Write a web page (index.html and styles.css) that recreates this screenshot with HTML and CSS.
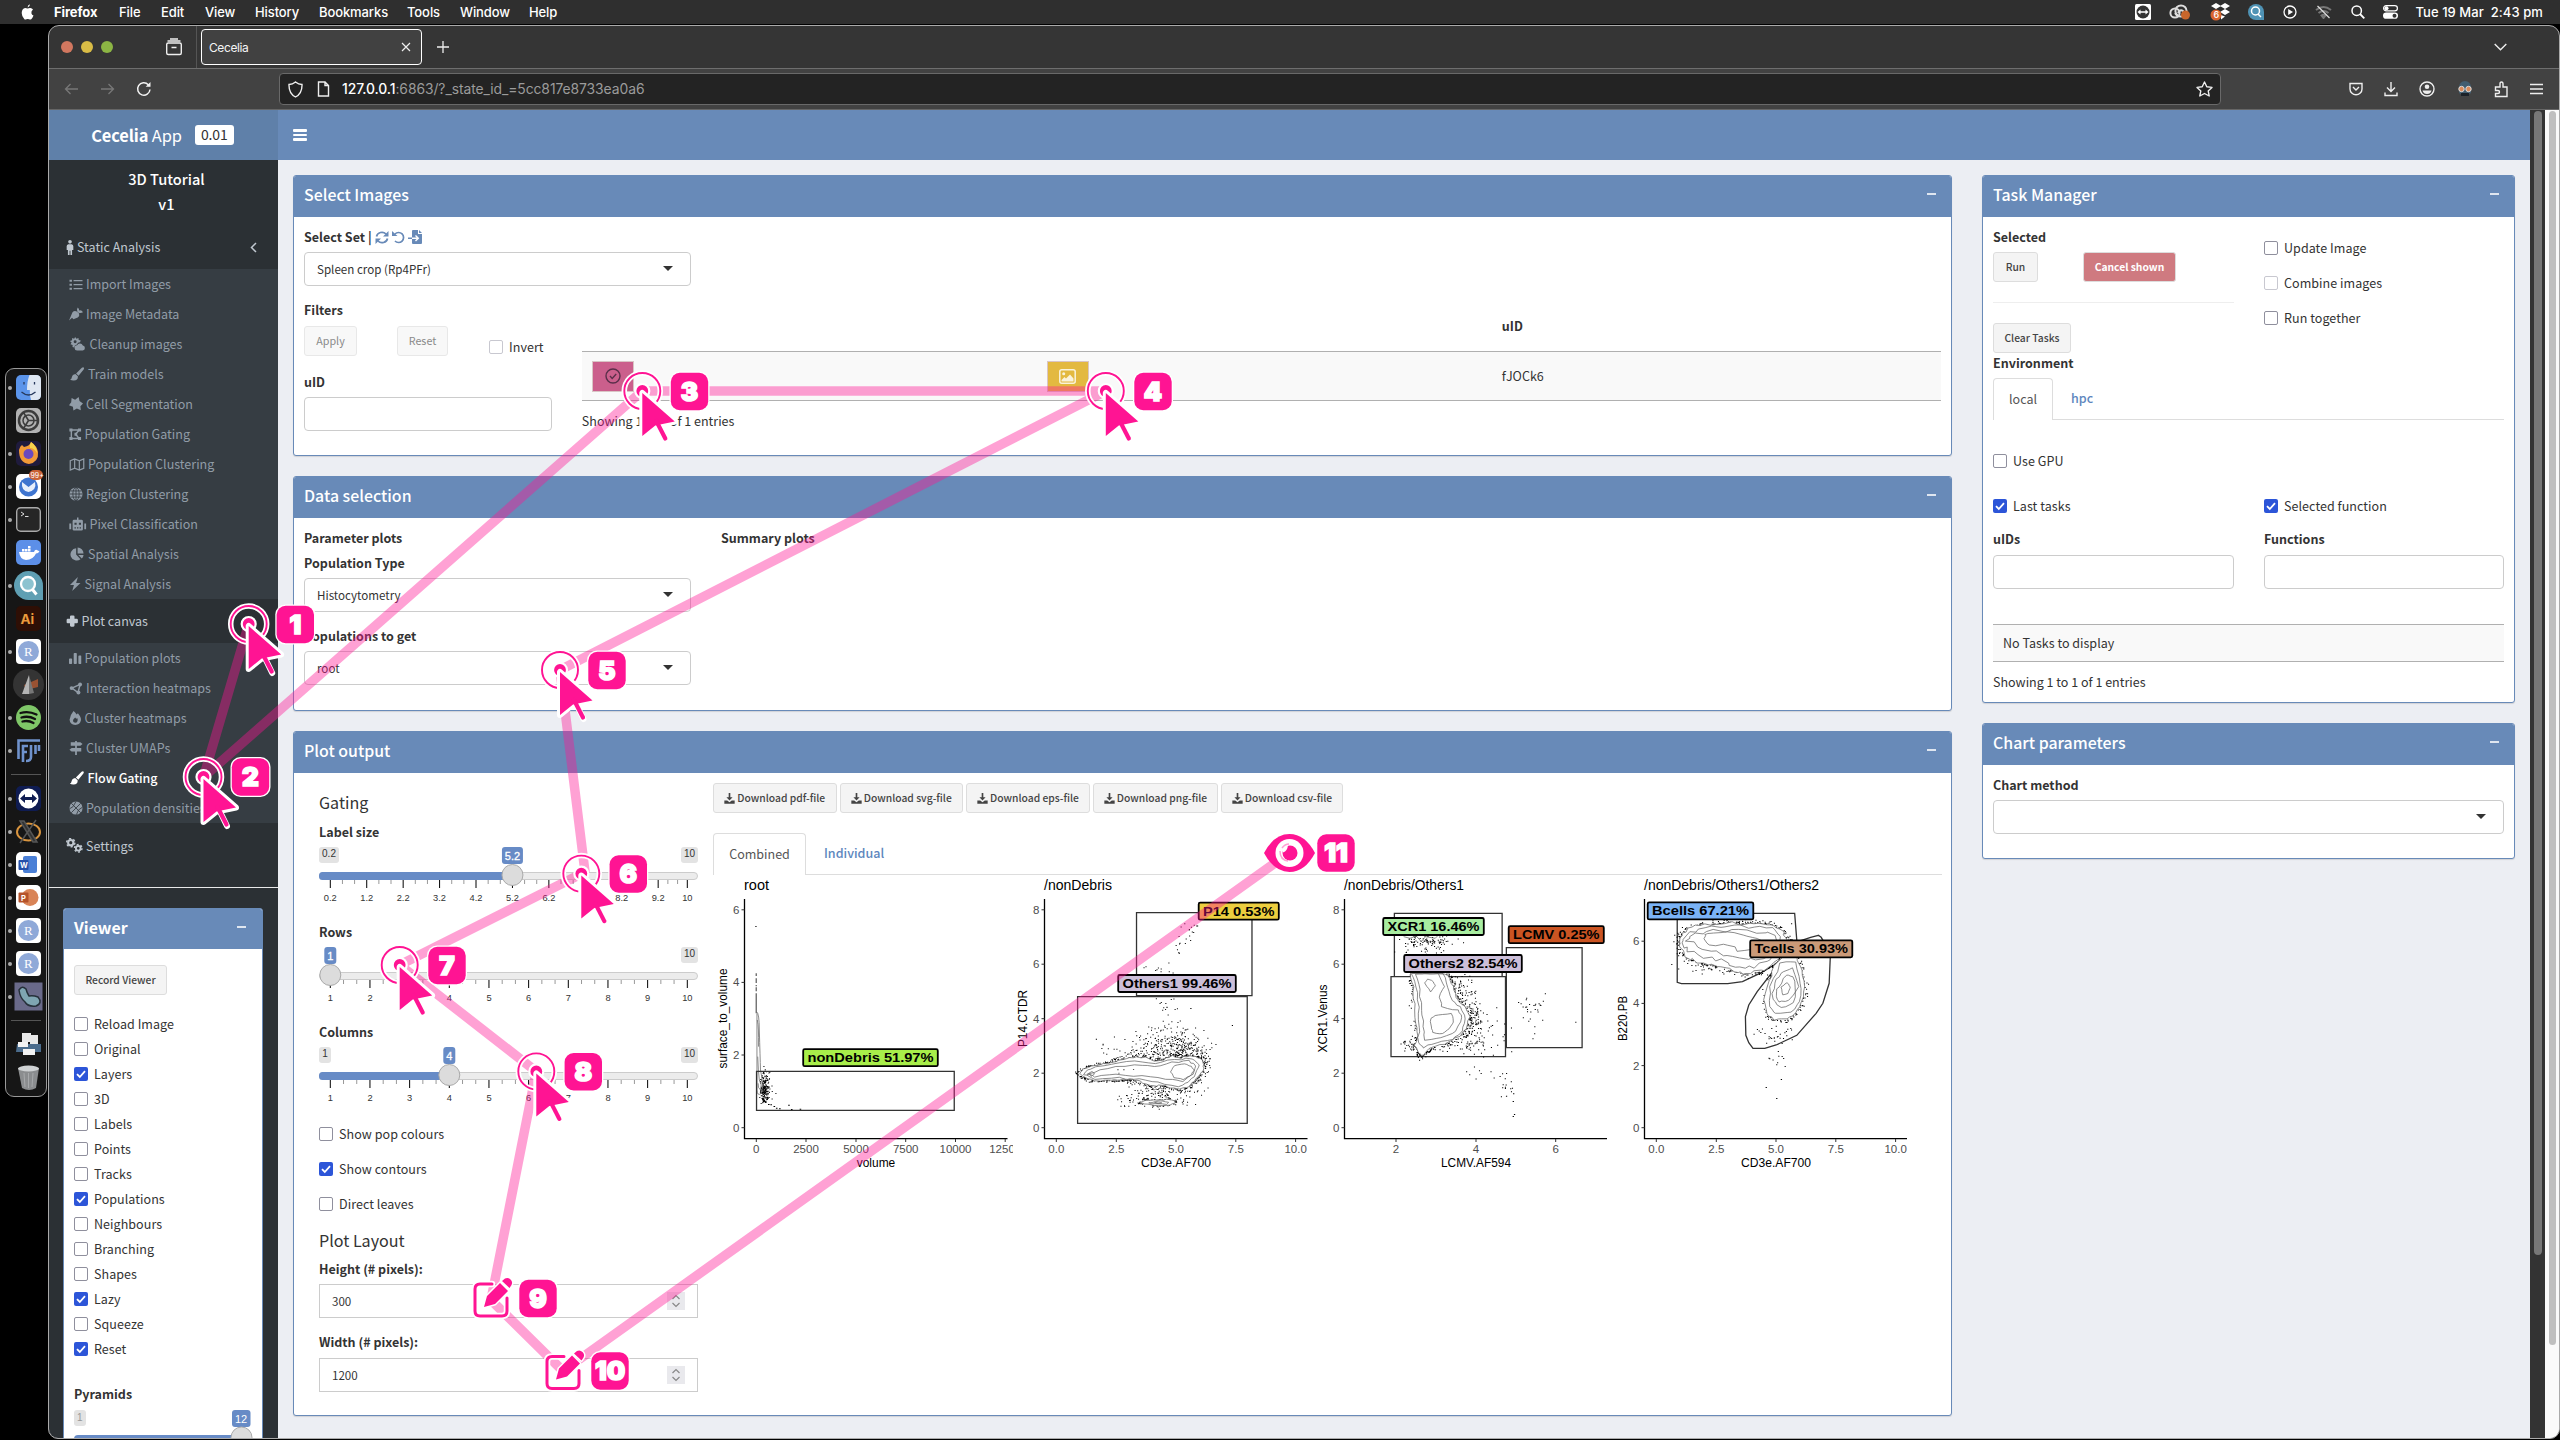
FILE: index.html
```html
<!DOCTYPE html>
<html lang="en">
<head>
<meta charset="utf-8">
<title>Cecelia</title>
<link rel="stylesheet" href="styles.css">
</head>
<body>
<svg width="0" height="0" class="defs" aria-hidden="true">
  <symbol id="i-list" viewBox="0 0 16 16"><path d="M0 2h3v2.500H0zM5 2.500h11v1.600H5zM0 7h3v2.500H0zM5 7.300h11v1.600H5zM0 12h3v2.500H0zM5 12.300h11v1.600H5z"/></symbol>
  <symbol id="i-carrot" viewBox="0 0 16 16"><path d="M0 15.500L4 6Q6 3.500 9 5l2.500 2.500Q12.500 10.500 10 12L5 14 3.500 12.200M9.500 5Q8.500 2.500 10 .5 12 2 11.500 4 14.500 3.200 16 6 13.500 7.500 11 6.500z"/></symbol>
  <symbol id="i-sun" viewBox="0 0 18 16"><path d="M6 0l1.500 2 2.300-.9.300 2.400 2.400.4-1 2.200Q9 6 8 8.500 5 9 5 12l-2-.5.2-2.500L.7 8.400 2 6.200 0 4.500l2.500-.9L2.600 1l2.300.9z"/><circle cx="6" cy="5.500" r="1.700" class="hole"/><path d="M8.500 15.500a3 3 0 0 1-.3-6 3.600 3.600 0 0 1 6.600.3 2.900 2.900 0 0 1 0 5.700z"/></symbol>
  <symbol id="i-brush" viewBox="0 0 16 16"><path d="M15.700.5q.8 1-.1 2.300L9.800 10 7 7.300 13.500.8q1.300-1 2.200-.3zM6.200 8l2.800 2.700q.4 4.300-4.500 4.800-2.500.2-4.500-1.200 1.800-.2 2-2.300Q2.600 8.500 6.200 8z"/></symbol>
  <symbol id="i-star" viewBox="0 0 16 16"><path d="M3 1l4 2 4-3 1 4.500 4 3-3 3 .5 4.500L9 13l-4 2.500-.5-4.300L0 9.500 2.500 6z"/></symbol>
  <symbol id="i-poly" viewBox="0 0 16 16"><path d="M3 2.500h10L8.500 8l4.500 5.500H3z" fill="none" stroke="currentColor" stroke-width="1.800"/><path d="M.5.5h4v4h-4zM11.500.5h4v4h-4zM.5 11.500h4v4h-4zM11.500 11.500h4v4h-4zM7 6.200h3.500v3.600H7z"/></symbol>
  <symbol id="i-map" viewBox="0 0 16 16"><path d="M.8 4L5.500 2l5 2 4.700-2v10l-4.700 2-5-2-4.700 2zM5.500 2v10M10.500 4v10" fill="none" stroke="currentColor" stroke-width="1.300"/></symbol>
  <symbol id="i-globe" viewBox="0 0 16 16"><circle cx="8" cy="8" r="7.500"/><path d="M8 .5v15M.5 8h15M1.500 4.500h13M1.500 11.500h13" fill="none" class="cut"/><ellipse cx="8" cy="8" rx="3.600" ry="7.500" fill="none" class="cut"/></symbol>
  <symbol id="i-robot" viewBox="0 0 18 16"><path d="M8.200.5h1.600V3H13q1.500 0 1.500 1.500V13q0 1.500-1.500 1.500H5q-1.500 0-1.500-1.500V4.500Q3.500 3 5 3h3.200zM0 7h2v6H0zM16 7h2v6h-2z"/><path class="hole" d="M5.500 6h2.300v2.200H5.500zM10.200 6h2.300v2.200h-2.300zM5.500 11h1.500v1.300H5.500zM8.200 11h1.500v1.300H8.200zM11 11h1.500v1.300H11z"/></symbol>
  <symbol id="i-pie" viewBox="0 0 16 16"><path d="M7 1.500v7.200l5 5.200A7 7 0 1 1 7 1.500zM8.700.5a7 7 0 0 1 6.800 6.800H8.700zM9.500 9h6a7 7 0 0 1-2 4.200z"/></symbol>
  <symbol id="i-bolt" viewBox="0 0 14 16"><path d="M10 0L1 9h4.500L3.500 16 13 6.800H8z"/></symbol>
  <symbol id="i-bars" viewBox="0 0 16 16"><path d="M0 9q0-1 1-1h2q1 0 1 1v5q0 1-1 1H1q-1 0-1-1zM6 2q0-1 1-1h2q1 0 1 1v12q0 1-1 1H7q-1 0-1-1zM12 5q0-1 1-1h2q1 0 1 1v9q0 1-1 1h-2q-1 0-1-1z"/></symbol>
  <symbol id="i-nodes" viewBox="0 0 16 16"><path d="M13 3L3 7.500l7.500 5.500z" fill="none" stroke="currentColor" stroke-width="1.800"/><circle cx="13" cy="3" r="2.400"/><circle cx="2.600" cy="7.500" r="2.400"/><circle cx="11" cy="13" r="2.400"/></symbol>
  <symbol id="i-fire" viewBox="0 0 14 16"><path d="M5 0q2 1.500 3.600 4L10 2.500Q14 7 13.500 10.500 12.500 15.500 7 16 1 15.500.5 10 .8 5 5 0z"/><path class="hole" d="M7 7.500q.5 1.200 1.500 1.400l.8-.8q1.500 3-.3 4.800-2 1.200-4-.2-1.700-2.500 2-5.200z"/></symbol>
  <symbol id="i-sign" viewBox="0 0 16 16"><path d="M7 0h2v16H7zM2 1.500h11L15.500 3.500 13 5.500H2zM3 8h11v4H3L.5 10z"/></symbol>
  <symbol id="i-ball" viewBox="0 0 16 16"><circle cx="8" cy="8" r="7.500"/><path class="cut" d="M2.500 2.500l11 11M13.500 2.500l-11 11M8 .5Q5 8 .5 9M15.500 7Q10 9 8.500 15.500" fill="none"/></symbol>
  <symbol id="i-cogs" viewBox="0 0 18 16"><g fill="none" stroke="currentColor"><circle cx="5" cy="5" r="2.800" stroke-width="2.200"/><circle cx="5" cy="5" r="4.400" stroke-width="1.500" stroke-dasharray="2.300 2.300"/><circle cx="13" cy="11" r="2.500" stroke-width="2"/><circle cx="13" cy="11" r="4" stroke-width="1.500" stroke-dasharray="2.090 2.090"/></g></symbol>
  <symbol id="i-plus" viewBox="0 0 16 16"><path d="M5 2q0-1.500 1.500-1.500h3Q11 .5 11 2v3h3q1.500 0 1.500 1.500v3Q15.500 11 14 11h-3v3q0 1.500-1.500 1.500h-3Q5 15.500 5 14v-3H2Q.5 11 .5 9.500v-3Q.5 5 2 5h3z"/></symbol>
  <symbol id="i-person" viewBox="0 0 8 18"><circle cx="4" cy="2.200" r="2.200"/><path d="M2 5h4q2 .8 2 2.500V12H6.500v6h-2v-5h-1v5h-2v-6H0V7.500Q0 5.800 2 5z"/></symbol>
  <symbol id="i-dl" viewBox="0 0 16 16"><path d="M6.800 0h2.400v6h3.300L8 10.800 3.500 6h3.300z"/><path d="M.5 11h4.200L8 13.500l3.300-2.500h4.200v4.500H.5z"/></symbol>
  <symbol id="i-check" viewBox="0 0 14 14"><path d="M3 7.200l2.800 2.800L11 4.200" fill="none" stroke="#fff" stroke-width="1.800"/></symbol>
  <symbol id="a-ring" viewBox="-24 -24 72 80" overflow="visible"><circle r="18" fill="none" stroke="#fff" stroke-width="5.500"/><circle r="18" fill="none" stroke="#ff1493" stroke-width="1.900"/><circle r="7" fill="#ff1493" stroke="#fff" stroke-width="2.200"/><g stroke-linejoin="round" stroke-linecap="round"><path d="M0 2V45L13 34.500 32.500 30.500zM15 31.500L23.500 49" fill="#fff" stroke="#fff" stroke-width="6"/><path d="M0 2V45L13 34.500 32.500 30.500z" fill="#ff1493"/><path d="M14 30L23 47.500" stroke="#ff1493" stroke-width="4.200"/></g></symbol>
</svg>

<header class="menubar">
  <svg class="apple" width="13" height="16" viewBox="0 0 13 16"><path fill="#fff" d="M9 .3Q9 2.700 6.600 3.600 6.400 1.200 9 .3zM6.600 4.600Q8 3.900 9.300 4q1.700.2 2.700 1.500-2 1.600-1.600 3.700.4 1.700 2.100 2.300-.8 2.300-2.300 3.700-.9.700-2.100.1-1.300-.6-2.700 0-1.200.6-2-.1Q.7 12.500.7 9 .9 4.700 4.200 4.100q1.200 0 2.400.5z"/></svg>
  <nav class="menus"><b class="m1">Firefox</b><span class="m2">File</span><span class="m3">Edit</span><span class="m4">View</span><span class="m5">History</span><span class="m6">Bookmarks</span><span class="m7">Tools</span><span class="m8">Window</span><span>Help</span></nav>
  <div class="tray">
    <svg width="16" height="16" viewBox="0 0 16 16"><rect width="16" height="16" rx="1.500" fill="#fff"/><circle cx="8" cy="8" r="6.500" fill="#333"/><path d="M2.500 8l3-2.500v1.700h5V5.500l3 2.500-3 2.500V8.800h-5v1.700z" fill="#fff"/></svg>
    <svg width="22" height="16" viewBox="0 0 22 16"><g fill="none" stroke="#ddd" stroke-width="2"><circle cx="6" cy="9" r="4.600"/><circle cx="12" cy="7" r="5.600"/><path d="M6 9l3 3.500M9 9q2-4 5-2l3 4"/></g><circle cx="16.500" cy="11" r="4.500" fill="#c8662b"/></svg>
    <svg width="20" height="18" viewBox="0 0 20 18"><path fill="#fff" d="M6 0l5 3-5 3-5-3zM15 0l5 3-5 3-5-3zM15 6l5 3-5 3-5-3zM11 12l4 1.500-4 3z"/><circle cx="6" cy="12" r="5.500" fill="#d9652f"/><text x="3.600" y="15.300" font-size="9" fill="#fff" font-family="Inter">6</text></svg>
    <svg width="16" height="16" viewBox="0 0 16 16"><path d="M8 0a8 8 0 0 1 8 8v8H8A8 8 0 0 1 8 0z" fill="#4f93b5"/><circle cx="7.500" cy="7" r="4" fill="none" stroke="#fff" stroke-width="1.500"/><path d="M10 10l3 3" stroke="#fff" stroke-width="1.500"/></svg>
    <svg width="14" height="14" viewBox="0 0 14 14"><circle cx="7" cy="7" r="6" fill="none" stroke="#fff" stroke-width="1.300"/><path d="M5.200 4l4.800 3-4.800 3z" fill="#fff"/></svg>
    <svg width="17" height="14" viewBox="0 0 17 14"><path d="M1 5q7.500-6 15 0M3.500 8q5-4 10 0M6.500 10.500q2-1.500 4 0L8.500 13z" fill="none" stroke="#777" stroke-width="2"/><path d="M2.500 1l12 12" stroke="#ddd" stroke-width="1.300"/></svg>
    <svg width="14" height="14" viewBox="0 0 14 14"><circle cx="5.700" cy="5.700" r="4.700" fill="none" stroke="#fff" stroke-width="1.500"/><path d="M9 9l4.300 4.300" stroke="#fff" stroke-width="1.800"/></svg>
    <svg width="15" height="14" viewBox="0 0 15 14"><rect x=".6" y=".6" width="13.800" height="5.200" rx="2.600" fill="none" stroke="#fff" stroke-width="1.200"/><circle cx="3.500" cy="3.200" r="2" fill="#fff"/><rect y="7.500" width="15" height="6.300" rx="3.100" fill="#fff"/><circle cx="11.500" cy="10.700" r="2" fill="#333"/></svg>
  </div>
  <span class="clock">Tue 19 Mar&nbsp; 2:43 pm</span>
</header>

<div class="window">
  <div class="tabbar">
    <i class="tl red"></i><i class="tl yel"></i><i class="tl grn"></i>
    <svg class="arch" width="18" height="18" viewBox="0 0 18 18" fill="none" stroke="#eee" stroke-width="1.400"><rect x="1.700" y="5" width="14.600" height="11.500" rx="1.500"/><path d="M2.500 3h13M5 1h8M6.500 9.500h5"/></svg>
    <span class="tdiv"></span>
    <div class="tab"><span>Cecelia</span><svg width="10" height="10" viewBox="0 0 10 10" stroke="#eee" stroke-width="1.200"><path d="M1 1l8 8M9 1L1 9"/></svg></div>
    <svg class="newtab" width="12" height="12" viewBox="0 0 12 12" stroke="#eee" stroke-width="1.300"><path d="M6 0v12M0 6h12"/></svg>
    <svg class="chev" width="13" height="8" viewBox="0 0 13 8" fill="none" stroke="#eee" stroke-width="1.400"><path d="M.7 1l5.800 5.700L12.300 1"/></svg>
  </div>
  <div class="toolbar">
    <svg width="15" height="14" viewBox="0 0 15 14" fill="none" stroke="#777" stroke-width="1.300"><path d="M14 7H1.500M6.500 2l-5 5 5 5"/></svg>
    <svg class="fwd" width="15" height="14" viewBox="0 0 15 14" fill="none" stroke="#777" stroke-width="1.300"><path d="M1 7h12.500M8.500 2l5 5-5 5"/></svg>
    <svg class="rel" width="16" height="16" viewBox="0 0 16 16" fill="none" stroke="#f2f2f2" stroke-width="1.500"><path d="M14 8.500A6.200 6.200 0 1 1 12.300 3.700L13.500 5"/><path d="M14.500 1v4.800H9.700z" fill="#f2f2f2" stroke="none"/></svg>
    <div class="url">
      <svg width="15" height="17" viewBox="0 0 15 17" fill="none" stroke="#eee" stroke-width="1.400"><path d="M7.500 1q3 2.500 6.500 2.500.3 9-6.500 12.500Q.7 12.500 1 3.500 4.500 3.500 7.500 1z"/></svg>
      <svg class="doc" width="13" height="16" viewBox="0 0 13 16" fill="none" stroke="#eee" stroke-width="1.400"><path d="M1.500 1H8l3.500 3.500V15h-10zM8 1v3.500h3.500"/></svg>
      <span class="addr"><b>127.0.0.1</b>:6863/?_state_id_=5cc817e8733ea0a6</span>
      <svg class="fav" width="17" height="16" viewBox="0 0 17 16" fill="none" stroke="#eee" stroke-width="1.400" stroke-linejoin="round"><path d="M8.500 1l2.300 4.700 5.200.7-3.800 3.500 1 5.100-4.700-2.500L3.800 15l1-5.100L1 6.400l5.200-.7z"/></svg>
    </div>
    <div class="exts">
      <svg width="14" height="14" viewBox="0 0 14 14" fill="none" stroke="#eee" stroke-width="1.400"><path d="M1 1.500h12V7a6 5.800 0 0 1-12 0zM4 5l3 3 3-3"/></svg>
      <svg width="14" height="16" viewBox="0 0 14 16" fill="none" stroke="#eee" stroke-width="1.400"><path d="M7 1v9M3 6.500l4 4 4-4M1 11.500V14.500h12v-3"/></svg>
      <svg width="16" height="16" viewBox="0 0 16 16"><circle cx="8" cy="8" r="7" fill="none" stroke="#eee" stroke-width="1.400"/><circle cx="8" cy="5.800" r="2.300" fill="#eee"/><path d="M3.500 9.500h9q-1 3.500-4.500 3.500t-4.500-3.500z" fill="#eee"/></svg>
      <svg width="16" height="16" viewBox="0 0 16 16"><path d="M2 6a6 6 0 0 1 12 0v6q-6 5-12 0z" fill="#415d70"/><g fill="#d98a5a" stroke="#ddd"><circle cx="4.500" cy="8" r="2.700"/><circle cx="11.500" cy="8" r="2.700"/></g><path d="M4 12h8v3H4z" fill="#1c2228"/></svg>
      <svg width="15" height="17" viewBox="0 0 15 17" fill="none" stroke="#eee" stroke-width="1.400"><path d="M1.500 6H6V3q0-2 1.500-2T9 3v3h4v9.500H1.500v-3H4q1.500 0 1.500-1.500T4 9.500H1.500z"/></svg>
      <svg width="13" height="12" viewBox="0 0 13 12" stroke="#eee" stroke-width="1.400"><path d="M0 1.500h13M0 6h13M0 10.500h13"/></svg>
    </div>
  </div>

  <div class="page">
    <aside class="side">
      <div class="logo"><b>Cecelia</b>&nbsp;App<span class="ver">0.01</span></div>
      <div class="proj">3D Tutorial<br>v1</div>
      <div class="top"><svg class="ico" width="8" height="15"><use href="#i-person"/></svg>Static Analysis<svg class="ar" width="7" height="11" viewBox="0 0 7 11" fill="none" stroke="#c0c8d0" stroke-width="1.500"><path d="M6 1L1.500 5.500 6 10"/></svg></div>
      <ul class="sub">
        <li><svg width="14" height="13"><use href="#i-list"/></svg>Import Images</li>
        <li><svg width="14" height="14"><use href="#i-carrot"/></svg>Image Metadata</li>
        <li><svg width="17.500" height="14"><use href="#i-sun"/></svg>Cleanup images</li>
        <li><svg width="16" height="14"><use href="#i-brush"/></svg>Train models</li>
        <li><svg width="14" height="14"><use href="#i-star"/></svg>Cell Segmentation</li>
        <li><svg width="12.500" height="12.500"><use href="#i-poly"/></svg>Population Gating</li>
        <li><svg width="16" height="15"><use href="#i-map"/></svg>Population Clustering</li>
        <li><svg width="14" height="14"><use href="#i-globe"/></svg>Region Clustering</li>
        <li><svg width="17.500" height="15"><use href="#i-robot"/></svg>Pixel Classification</li>
        <li><svg width="16" height="14"><use href="#i-pie"/></svg>Spatial Analysis</li>
        <li><svg width="12.500" height="14"><use href="#i-bolt"/></svg>Signal Analysis</li>
      </ul>
      <div class="top"><svg class="ico" width="12.500" height="12"><use href="#i-plus"/></svg>Plot canvas</div>
      <ul class="sub">
        <li><svg width="12.500" height="13"><use href="#i-bars"/></svg>Population plots</li>
        <li><svg width="14" height="13"><use href="#i-nodes"/></svg>Interaction heatmaps</li>
        <li><svg width="12.500" height="14"><use href="#i-fire"/></svg>Cluster heatmaps</li>
        <li><svg width="14" height="14"><use href="#i-sign"/></svg>Cluster UMAPs</li>
        <li class="on"><svg width="15.500" height="14"><use href="#i-brush"/></svg>Flow Gating</li>
        <li><svg width="14" height="14"><use href="#i-ball"/></svg>Population densities</li>
      </ul>
      <div class="top last"><svg class="ico" width="17" height="15"><use href="#i-cogs"/></svg>Settings</div>
      <section class="box viewer">
        <h3>Viewer<i></i></h3>
        <div class="vbody">
          <button class="btn rec">Record Viewer</button>
          <div class="checks" id="viewer-checks">
            <label class="cb"><i></i>Reload Image</label><label class="cb"><i></i>Original</label>
            <label class="cb on"><i><svg><use href="#i-check"/></svg></i>Layers</label><label class="cb"><i></i>3D</label>
            <label class="cb"><i></i>Labels</label><label class="cb"><i></i>Points</label><label class="cb"><i></i>Tracks</label>
            <label class="cb on"><i><svg><use href="#i-check"/></svg></i>Populations</label><label class="cb"><i></i>Neighbours</label>
            <label class="cb"><i></i>Branching</label><label class="cb"><i></i>Shapes</label>
            <label class="cb on"><i><svg><use href="#i-check"/></svg></i>Lazy</label><label class="cb"><i></i>Squeeze</label>
            <label class="cb on"><i><svg><use href="#i-check"/></svg></i>Reset</label>
          </div>
          <div class="lbl">Pyramids</div>
          <svg class="pyr" width="180" height="30"><rect y="1" width="12" height="16" rx="3" fill="#e3e3e3"/><text x="3" y="12" font-size="10" fill="#999">1</text><rect y="26" width="168" height="8" rx="4" fill="#678bc6"/><rect x="158" y="1" width="18.500" height="17" rx="3" fill="#678bc6"/><text x="161" y="14" font-size="11" fill="#fff">12</text><circle cx="167.500" cy="28.500" r="10.500" fill="#dcdcdc" stroke="#aaa"/></svg>
        </div>
      </section>
    </aside>

    <main>
      <div class="navbar"><span></span><span></span><span></span></div>
      <div class="cols">
        <div class="colA">
          <section class="box images">
            <h3>Select Images<i></i></h3>
            <div class="bd">
              <div class="lbl setl">Select Set |
                <svg width="14" height="13" viewBox="0 0 14 13" fill="none" stroke="#688ab8" stroke-width="1.700"><path d="M1.500 5.500A5.500 5 0 0 1 11 3M12.500 7.500A5.500 5 0 0 1 3 10"/><path fill="#688ab8" stroke="none" d="M13.500 0v5.500H8zM.5 13V7.500H6z"/></svg>
                <svg width="13" height="13" viewBox="0 0 13 13" fill="none" stroke="#688ab8" stroke-width="1.700"><path d="M3 3a5 5 0 1 1 0 7"/><path fill="#688ab8" stroke="none" d="M0 0l5.500 5H0z"/></svg>
                <svg width="14" height="14" viewBox="0 0 14 14"><path fill="#688ab8" d="M4 1q0-1 1-1h5v4h4v9q0 1-1 1H5q-1 0-1-1zM11 0l3 3h-3zM0 7.500h4v1.600H0z"/><path d="M4 8.300h6M7.500 5.500l2.800 2.800L7.500 11" stroke="#fff" stroke-width="1.400" fill="none"/></svg>
              </div>
              <div class="sel w387">Spleen crop (Rp4PFr)<u></u></div>
              <div class="split">
                <div class="filt">
                  <div class="lbl">Filters</div>
                  <div class="frow"><button class="btn dis b53">Apply</button><button class="btn dis b51">Reset</button><label class="cb off"><i></i>Invert</label></div>
                  <div class="lbl u">uID</div>
                  <div class="inp"></div>
                </div>
                <div class="tbl">
                  <div class="th">uID</div>
                  <div class="tr"><span class="tb pk"><svg width="16" height="16" viewBox="0 0 16 16" fill="none" stroke="#5a2f4a" stroke-width="1.400"><circle cx="8" cy="8" r="7"/><path d="M5 8l2.200 2.400L11.200 6"/></svg></span><span class="tb yl"><svg width="17" height="15" viewBox="0 0 17 15"><rect x=".8" y=".8" width="15.400" height="13.400" rx="2" fill="none" stroke="#faf3dc" stroke-width="1.500"/><circle cx="4.700" cy="4.700" r="1.500" fill="#faf3dc"/><path d="M2.500 12.500V11l3-3 1.500 1.500L11 5.500l3.500 4v3z" fill="#faf3dc"/></svg></span><span class="td">fJOCk6</span></div>
                  <div class="info">Showing 1 to 1 of 1 entries</div>
                </div>
              </div>
            </div>
          </section>

          <section class="box data">
            <h3>Data selection<i></i></h3>
            <div class="bd two">
              <div class="c1">
                <div class="lbl">Parameter plots</div>
                <div class="lbl pt">Population Type</div>
                <div class="sel w387">Histocytometry<u></u></div>
                <div class="lbl pg">Populations to get</div>
                <div class="sel w387">root<u></u></div>
              </div>
              <div class="lbl">Summary plots</div>
            </div>
          </section>

          <section class="box output">
            <h3>Plot output<i></i></h3>
            <div class="ob">
              <div class="gate">
                <h4>Gating</h4>
                <div class="lbl s">Label size</div>
                <svg class="slider" data-min="0.2" data-max="10" data-val="5.2" width="380" height="60"></svg>
                <div class="lbl s">Rows</div>
                <svg class="slider" data-min="1" data-max="10" data-val="1" width="380" height="60"></svg>
                <div class="lbl s">Columns</div>
                <svg class="slider" data-min="1" data-max="10" data-val="4" width="380" height="60"></svg>
                <label class="cb g"><i></i>Show pop colours</label>
                <label class="cb g on"><i><svg><use href="#i-check"/></svg></i>Show contours</label>
                <label class="cb g"><i></i>Direct leaves</label>
                <h4 class="pl">Plot Layout</h4>
                <div class="lbl h">Height (# pixels):</div>
                <div class="num">300<svg width="18" height="18" viewBox="0 0 18 18"><rect width="18" height="18" fill="#e9e9ed"/><path d="M5.500 7L9 3.500 12.500 7M5.500 11L9 14.500l3.500-3.500" fill="none" stroke="#888" stroke-width="1.200"/></svg></div>
                <div class="lbl w">Width (# pixels):</div>
                <div class="num">1200<svg width="18" height="18" viewBox="0 0 18 18"><rect width="18" height="18" fill="#e9e9ed"/><path d="M5.500 7L9 3.500 12.500 7M5.500 11L9 14.500l3.500-3.500" fill="none" stroke="#888" stroke-width="1.200"/></svg></div>
              </div>
              <div class="plots">
                <div class="dls">
                  <button class="btn d1"><svg width="11" height="11"><use href="#i-dl"/></svg>Download pdf-file</button>
                  <button class="btn d1"><svg width="11" height="11"><use href="#i-dl"/></svg>Download svg-file</button>
                  <button class="btn d2"><svg width="11" height="11"><use href="#i-dl"/></svg>Download eps-file</button>
                  <button class="btn d3"><svg width="11" height="11"><use href="#i-dl"/></svg>Download png-file</button>
                  <button class="btn d4"><svg width="11" height="11"><use href="#i-dl"/></svg>Download csv-file</button>
                </div>
                <div class="tabs"><span class="act t93">Combined</span><span class="lnk">Individual</span></div>
                <svg id="facets" width="1200" height="300" viewBox="713 876 1200 300"></svg>
              </div>
            </div>
          </section>
        </div>

        <div class="colB">
          <section class="box tasks">
            <h3>Task Manager<i></i></h3>
            <div class="bd">
              <div class="duo">
                <div class="half">
                  <div class="lbl">Selected</div>
                  <div class="runs"><button class="btn r45">Run</button><button class="btn cancel">Cancel shown</button></div>
                  <div class="hr"></div>
                  <button class="btn clr">Clear Tasks</button>
                </div>
                <div class="half opt"><label class="cb"><i></i>Update Image</label><label class="cb off"><i></i>Combine images</label><label class="cb"><i></i>Run together</label></div>
              </div>
              <div class="lbl">Environment</div>
              <div class="tabs env"><span class="act t60">local</span><span class="lnk">hpc</span></div>
              <label class="cb gpu"><i></i>Use GPU</label>
              <div class="duo lt"><div class="half"><label class="cb on"><i><svg><use href="#i-check"/></svg></i>Last tasks</label></div><div class="half"><label class="cb on"><i><svg><use href="#i-check"/></svg></i>Selected function</label></div></div>
              <div class="duo"><div class="half"><div class="lbl">uIDs</div><div class="inp"></div></div><div class="half"><div class="lbl">Functions</div><div class="inp"></div></div></div>
              <div class="none">No Tasks to display</div>
              <div class="info">Showing 1 to 1 of 1 entries</div>
            </div>
          </section>
          <section class="box chart">
            <h3>Chart parameters<i></i></h3>
            <div class="bd"><div class="lbl">Chart method</div><div class="sel"><u></u></div></div>
          </section>
        </div>
      </div>
    </main>
    <div class="sb1"><i></i></div>
    <div class="sb2"><i></i></div>
  </div>
</div>

<div class="dock">
  <div class="di run"><svg viewBox="0 0 25 25"><rect width="25" height="25" rx="5" fill="#5b94ea"/><path d="M13.500 0H20q5 0 5 5v15q0 5-5 5h-5q-1.500-5-1.200-10H11Q11 6 13.500 0z" fill="#dfe7f2"/><path d="M5.500 17q7 6 14 0M8 7v2.500M18.500 7v2.500" stroke="#27395c" stroke-width="1.300" fill="none"/></svg></div>
  <div class="di"><svg viewBox="0 0 25 25"><rect width="25" height="25" rx="5" fill="#b2b2b2"/><circle cx="12.500" cy="12.500" r="9.500" fill="none" stroke="#3c3c3c" stroke-width="2.500"/><circle cx="12.500" cy="12.500" r="5.500" fill="none" stroke="#3c3c3c" stroke-width="1.500"/><path d="M12.500 12.500H22M12.500 12.500l-5-8M12.500 12.500l-5 8" stroke="#3c3c3c" stroke-width="1.600"/></svg></div>
  <div class="di run"><svg viewBox="0 0 25 25"><rect width="25" height="25" rx="5" fill="#1f1b3d"/><path d="M3 9q1-4 3-5l2 2q6-1 7-5 6 4 7 10 1 10-9 12Q3 22 3 9z" fill="#f19a38"/><circle cx="12.500" cy="13" r="5" fill="#6a4ac0"/><path d="M15 1q6 4 6 11-3-5-7-5-1-3 1-6z" fill="#f8d34c"/></svg></div>
  <div class="di run"><svg viewBox="0 0 25 25" overflow="visible"><rect width="25" height="25" rx="5" fill="#fff"/><circle cx="12.500" cy="13" r="9.500" fill="#3e74cf"/><path d="M6 8l6.500 5L19 8q2 8-6.500 10Q5 17 6 8z" fill="#e8effb"/><rect x="13" y="-4" width="14" height="10" rx="5" fill="#c96236"/><text x="14.500" y="3.500" font-size="7" fill="#fff" font-family="Inter">99+</text></svg></div>
  <div class="di run"><svg viewBox="0 0 25 25"><rect x=".7" y=".7" width="23.600" height="23.600" rx="4" fill="#262626" stroke="#aaa" stroke-width="1.400"/><path d="M5 5l3 2-3 2M9 9.500h3.500" stroke="#ddd" fill="none"/></svg></div>
  <div class="di"><svg viewBox="0 0 25 25"><rect width="25" height="25" rx="5" fill="#5c8fe8"/><path d="M3 12h15q1-3 3-2 1 1 2.500 1-1 2.500-3.500 2.500Q17 20 10 20q-6-.5-7-8zM6 9h2.500v2.500H6zM9 9h2.500v2.500H9zM12 9h2.500v2.500H12zM12 6h2.500v2.500H12z" fill="#fff"/></svg></div>
  <div class="di run"><svg viewBox="0 0 25 25" overflow="visible"><path d="M12.500-2A14.500 14.500 0 0 1 27 12.500V27H12.500a14.500 14.500 0 0 1 0-29z" fill="#5f9fb3"/><circle cx="12" cy="11" r="7" fill="#8cc3d0" stroke="#fff" stroke-width="2.300"/><path d="M16.500 16.500l4 5" stroke="#fff" stroke-width="3"/></svg></div>
  <div class="di"><svg viewBox="0 0 25 25"><rect width="25" height="25" rx="5" fill="#2e0f05"/><text x="4.500" y="17.500" font-size="13.500" font-weight="700" font-family="Inter" fill="#eb9a3c">Ai</text></svg></div>
  <div class="di run"><svg viewBox="0 0 25 25"><rect width="25" height="25" rx="4" fill="#fff"/><circle cx="12.500" cy="12.500" r="10.500" fill="#8fa9d8"/><text x="8" y="17" font-size="13" font-family="Liberation Serif" fill="#fff">R</text></svg></div>
  <div class="di"><svg viewBox="0 0 25 25" overflow="visible"><circle cx="12.500" cy="12.500" r="15.500" fill="#343434"/><path d="M8 13l14-6v8l-12 3z" fill="#9a5232"/><path d="M13 3v19H6z" fill="#b5b5b5"/><path d="M13 3l5 18-5 1z" fill="#777"/></svg></div>
  <div class="di run"><svg viewBox="0 0 25 25"><circle cx="12.500" cy="12.500" r="12.500" fill="#7fc768"/><path d="M4.500 8q8-2.500 16 1.500M5.500 12.500q7-2 13.500 1.500M6.500 16.500q6-1.500 11 1.500" stroke="#111" stroke-width="2.300" fill="none" stroke-linecap="round"/></svg></div>
  <div class="di run"><svg viewBox="0 0 25 25"><path d="M2.500 21V2.500H24M7 24V8h5M7 14h4M15 7v12q0 4-5 4M19.500 7v9M23 7v6" stroke="#6f92cc" stroke-width="2.600" fill="none"/></svg></div>
  <hr>
  <div class="di run"><svg viewBox="0 0 25 25"><rect width="25" height="25" rx="5" fill="#0f1c52"/><circle cx="12.500" cy="12.500" r="10" fill="#fff"/><path d="M4 12.500L9 8v3h7V8l5 4.500-5 4.500v-3H9v3z" fill="#0f1c52"/></svg></div>
  <div class="di run"><svg viewBox="0 0 25 25"><ellipse cx="12.500" cy="13" rx="11.500" ry="8.500" fill="none" stroke="#d9953f" stroke-width="2"/><path d="M4 2h4l13 21h-4zM20 1L4 24" fill="#333" stroke="#555" stroke-width="1.500"/></svg></div>
  <div class="di run"><svg viewBox="0 0 25 25"><rect width="25" height="25" rx="5" fill="#fff"/><rect x="7" y="4" width="14" height="17" rx="2" fill="#4a7fd6"/><rect x="2.500" y="8" width="10" height="10" rx="1" fill="#2650a8"/><text x="4" y="16" font-size="7.500" font-weight="700" font-family="Inter" fill="#fff">W</text></svg></div>
  <div class="di run"><svg viewBox="0 0 25 25"><rect width="25" height="25" rx="5" fill="#fff"/><circle cx="14" cy="12.500" r="8.500" fill="#d98457"/><rect x="2.500" y="7.500" width="10" height="10" rx="1" fill="#b5522a"/><text x="5" y="15.500" font-size="7.500" font-weight="700" font-family="Inter" fill="#fff">P</text></svg></div>
  <div class="di run"><svg viewBox="0 0 25 25"><rect width="25" height="25" rx="4" fill="#fff"/><circle cx="12.500" cy="12.500" r="10.500" fill="#8fa9d8"/><text x="8" y="17" font-size="13" font-family="Liberation Serif" fill="#fff">R</text></svg></div>
  <div class="di run"><svg viewBox="0 0 25 25"><rect width="25" height="25" rx="4" fill="#fff"/><circle cx="12.500" cy="12.500" r="10.500" fill="#8fa9d8"/><text x="8" y="17" font-size="13" font-family="Liberation Serif" fill="#fff">R</text></svg></div>
  <div class="di run"><svg viewBox="0 0 25 25" overflow="visible"><rect x="-1.500" y="-1.500" width="28" height="28" fill="#6a6a8a"/><path d="M3 6q3-5 7-1 1 4 3 7 4-1 9 1 5 6-2 9-8 1-11-4Q4 14 3 6z" fill="#7fa5b2" stroke="#26303a" stroke-width="1.500"/></svg></div>
  <hr class="b">
  <div class="di"><svg viewBox="0 0 25 25"><path d="M6 1h9v9H6zM14 3h8v9h-8z" fill="#e8e8e8"/><path d="M1 12h24v8H0z" fill="#4b6c8c"/><path d="M2 10h10v5H2zM7 17h12v6H7z" fill="#f2f2f2"/></svg></div>
  <div class="di"><svg viewBox="0 0 25 25"><path d="M2 3h21l-3 20q-7 4-14 0z" fill="#8b8d8f"/><ellipse cx="12.500" cy="3.500" rx="10.500" ry="3" fill="#cfd2d4"/><path d="M8 8l1 14M12.500 8v15M17 8l-1 14" stroke="#a8aaac"/></svg></div>
</div>

<svg class="notes" width="2560" height="1440">
  <path d="M248.700 624L203.500 777 642.300 391H1105.800L560 670 585 872 399.700 965 536.300 1071.400 491 1300 563 1371 1289 853" class="route"/>
  <g id="marks"></g>
  <g class="edit"><g id="pen"><path class="o" d="M492 1284H480q-5 0-5 5v22q0 5 5 5h22q5 0 5-5v-13"/><path class="p" d="M492 1284H480q-5 0-5 5v22q0 5 5 5h22q5 0 5-5v-13"/><path d="M484 1307l3-11 13-13 8 8-13 13zM502 1281l3-2.500q3-1.500 5.500 1t1 5.500l-2 3z" class="f"/></g><use href="#pen" x="72" y="72.500"/></g>
  <g><path d="M1264 853q10-19 25.500-19t25.500 19q-10 19-25.500 19t-25.500-19z" fill="#ff1493"/><circle cx="1289.500" cy="853" r="14" fill="#fff"/><circle cx="1290" cy="853" r="7.500" fill="#ff1493"/><path d="M1288 845q-.5 6-5 7.500V842z" fill="#fff"/><path d="M1280 851q0 9 8 10M1282 848q3-4 7-4" stroke="#ffa0d4" stroke-width="1.500" fill="none"/></g>
</svg>
<script src="app.js"></script>
</body>
</html>
```
FILE: styles.css
```css
* { box-sizing: border-box; }
:root { --src: "Noto Sans CJK SC", "Open Sans", sans-serif; --ui: Inter, "Liberation Sans", sans-serif; --blue: #688ab8; }
body { margin: 0; width: 2560px; height: 1440px; overflow: hidden; background: #000; font: 12.53px/20px var(--src); color: #333; position: relative; }
svg { flex: none; display: block; }
.defs { position: absolute; }
ul, h3, h4 { margin: 0; padding: 0; font-weight: 400; list-style: none; }

.menubar { height: 24px; background: #2f2f2f; color: #fff; font: 500 13px/24px var(--ui); display: flex; align-items: center; padding-left: 21px; letter-spacing: -.1px; white-space: pre; }
.apple { margin-right: 20px; }
.menus { display: flex; }
.m1 { width: 65px; } .m2 { width: 42px; } .m3 { width: 44px; } .m4 { width: 50px; } .m5 { width: 64px; } .m6 { width: 88px; } .m7 { width: 53px; } .m8 { width: 69px; }
.tray { margin-left: auto; display: flex; align-items: center; gap: 18.500px; margin-right: 17.500px; }
.clock { width: 144.500px; font-size: 13px; letter-spacing: .05px; }

.window { margin: 1px 0 0 48px; height: 1414px; border: 1px solid #aaa; border-radius: 11px 11px 10px 10px; overflow: hidden; display: flex; flex-direction: column; background: #353535; }
.tabbar { height: 43px; border-bottom: 1px solid #6e6e6e; display: flex; align-items: center; padding-left: 12px; flex: none; }
.tl { width: 12px; height: 12px; border-radius: 50%; margin-right: 8px; }
.red { background: #d1775f; } .yel { background: #d9bc46; } .grn { background: #8cb544; }
.arch { margin: 0 13px 0 44px; }
.tdiv { width: 1px; height: 42px; background: #555; margin-right: 4px; }
.tab { width: 221px; height: 36px; border: 1px solid #fff; border-radius: 4px; background: #414141; color: #f4f4f4; font: 12px var(--ui); display: flex; align-items: center; justify-content: space-between; padding: 0 10px 0 7px; letter-spacing: -.4px; }
.newtab { margin-left: 15px; }
.chev { margin-left: auto; margin-right: 52px; }
.toolbar { height: 41px; background: #424242; border-bottom: 1px solid #666; display: flex; align-items: center; padding-left: 15px; flex: none; }
.fwd { margin-left: 21px; } .rel { margin: 0 127px 0 21px; }
.url { width: 1942px; height: 32px; background: #232323; border: 1px solid #696969; border-radius: 4px; display: flex; align-items: center; padding: 0 7px 0 8px; }
.doc { margin: 0 12px 0 14px; }
.addr { font: 13.9px var(--ui); color: #9b9b9b; letter-spacing: -.08px; }
.addr b { font-weight: 500; color: #fff; }
.fav { margin-left: auto; }
.exts { display: flex; align-items: center; justify-content: space-between; width: 194px; margin-left: 128px; }

.page { flex: 1; display: flex; min-height: 0; background: #eceef3; }
.side { width: 229px; background: #2b3034; flex: none; display: flex; flex-direction: column; overflow: hidden; }
.logo { height: 50px; flex: none; background: #5f80a9; color: #fff; font-size: 16.4px; line-height: 49px; display: flex; align-items: center; justify-content: center; padding-right: 2px; letter-spacing: -.1px; }
.ver { background: #fff; color: #333; font-size: 14px; line-height: 18px; height: 20px; width: 39px; text-align: center; border-radius: 3px; margin-left: 13px; }
.proj { height: 65px; flex: none; text-align: center; color: #fff; font-size: 14.6px; line-height: 24.500px; padding: 7px 0 0 6px; font-weight: 500; }
.top { height: 44px; flex: none; display: flex; align-items: center; color: #c0c8d0; padding-left: 17px; }
.top .ico { margin-right: 3px; fill: currentColor; color: #c0c8d0; }
.top .ar { margin: 0 21px 0 auto; }
.top.last { height: 65px; border-bottom: 1px solid #e8e8e8; padding-bottom: 19px; }
.sub { background: #363d43; flex: none; color: #919ca7; }
.sub li { height: 30px; display: flex; align-items: center; padding-left: 20px; gap: 3px; white-space: nowrap; }
.sub svg { fill: currentColor; }
.sub .on { color: #fff; font-weight: 500; letter-spacing: -.1px; }
.hole { fill: #363d43; } .cut { stroke: #363d43; stroke-width: 1; }

.box { background: #fff; border: 1px solid var(--blue); border-radius: 3px; box-shadow: 0 1px 1px rgba(0,0,0,.12); overflow: hidden; flex: none; }
.box h3 { background: var(--blue); color: #fff; font-size: 15.9px; font-weight: 500; height: 41px; line-height: 38px; padding: 0 15px 0 10px; display: flex; justify-content: space-between; }
.box h3 i { width: 9px; height: 1.500px; background: #dfe6f0; margin-top: 17px; }
.bd { padding: 11px 10px 0; }
.lbl { font-weight: 700; height: 20px; line-height: 18px; white-space: nowrap; }
.sel, .inp, .num { height: 34px; border: 1px solid #ccc; border-radius: 4px; background: #fff; }
.sel { display: flex; align-items: center; justify-content: space-between; padding: 0 17px 1px 12px; font-size: 11.6px; }
.sel u { margin-left: auto; border: 5px solid transparent; border-top-color: #333; border-bottom: 0; }
.w387 { width: 387px; }
.btn { height: 30px; border: 1px solid #ddd; border-radius: 3px; background: #f4f4f4; color: #444; font: 500 10.3px/28px var(--src); padding: 0; text-align: center; white-space: nowrap; }
.dis { color: #8a8a8a; background: #f8f8f8; font-weight: 400; border-color: #e8e8e8; font-size: 10.74px; }
.cb { display: flex; align-items: center; height: 20px; gap: 6px; white-space: nowrap; letter-spacing: .05px; line-height: 18px; padding-bottom: 1px; }
.cb i { width: 14px; height: 14px; border: 1.500px solid #8f8f9d; border-radius: 2px; flex: none; }
.cb.on i { background: #2c55d8; border: 0; } .cb svg { width: 14px; height: 14px; }
.cb.off i { border-color: #c8c8d0; }

.viewer { margin: 20px 0 0 14px; width: 200px; height: 560px; }
.viewer h3 { height: 40px; line-height: 37px; font-weight: 700; padding-right: 16px; }
.vbody { padding: 16px 10px; }
.rec { width: 93px; display: block; }
.checks { display: flex; flex-direction: column; gap: 5px; margin: 19px 0 26px; }
.pyr, .slider { font-family: "Liberation Sans", Arial, sans-serif; overflow: visible; }
.pyr { margin-top: 4px; }

main { width: 2252px; flex: none; display: flex; flex-direction: column; }
.navbar { height: 50px; background: var(--blue); flex: none; display: flex; flex-direction: column; justify-content: center; gap: 2px; padding-left: 15px; }
.navbar span { width: 14px; height: 2.700px; background: #fff; border-radius: 1px; }
.cols { display: flex; padding: 15px 15px 0 15px; gap: 30px; }
.colA { width: 1659px; } .colB { width: 533px; }
.images { height: 281px; margin-bottom: 20px; }
.data { height: 235px; margin-bottom: 20px; }
.output { height: 685px; }
.tasks { height: 528px; margin-bottom: 20px; }
.chart { height: 136px; }
.setl { display: flex; align-items: center; gap: 3px; margin-bottom: 4px; padding-bottom: 2px; }
.split { display: flex; margin-top: 15px; }
.filt { width: 248px; margin-right: 30px; }
.frow { display: flex; margin-top: 5px; }
.b53 { width: 53px; margin-right: 40px; } .b51 { width: 51px; margin-right: 41px; }
.frow .cb { margin-top: 11px; }
.u { margin: 16px 0 4px; }
.tbl { width: 1360px; padding-top: 15px; }
.th { font-weight: 700; padding-left: 920px; height: 35px; line-height: 19px; }
.tr { height: 50px; border: solid #b0b0b0; border-width: 1px 0; background: #f9f9f9; display: flex; align-items: center; padding-left: 10px; }
.tb { width: 42px; height: 31px; display: flex; align-items: center; justify-content: center; border: 1px solid #d9c5c5; }
.pk { background: #cb5f8c; margin-right: 413px; } .yl { background: #e3b940; margin-right: 413px; }
.info { margin-top: 10px; letter-spacing: 0; }

.two { display: flex; } .two .c1 { width: 417px; }
.pt { margin: 5px 0 4px; } .pg { margin: 15px 0 4px; }

.ob { display: flex; padding: 0 0 0 25px; }
.gate { width: 379px; margin-right: 15px; padding-top: 18px; }
h4 { font-size: 16.1px; height: 22px; line-height: 22px; }
.s { margin-top: 10px; }
.slider { margin-top: 4px; width: 380px; height: 60px; }
.slider + .s { margin-top: 16px; }
.slider + .cb { margin-top: 17px; }
.cb.g { margin-bottom: 15px; }
.pl { margin-top: 11px; }
.h { margin: 9px 0 4px; } .w { margin: 15px 0 5px; }
.num { border-radius: 0; width: 379px; display: flex; align-items: center; justify-content: space-between; padding: 0 12px; font-size: 11.6px; }
.plots { width: 1229px; padding-top: 10px; }
.dls { display: flex; gap: 3px; }
.dls .btn { display: flex; align-items: center; justify-content: center; gap: 2px; }
.dls svg { fill: #444; }
.d1 { width: 123.500px; } .d2 { width: 124px; } .d3 { width: 125px; } .d4 { width: 122px; }
.tabs { display: flex; height: 42px; margin-top: 20px; border-bottom: 1px solid #ddd; line-height: 40px; }
.act { border: 1px solid #ddd; border-bottom: 0; border-radius: 4px 4px 0 0; background: #fff; height: 42px; text-align: center; color: #555; margin-right: 18px; }
.t93 { width: 93px; } .t60 { width: 60px; }
.lnk { color: #5d86bd; font-weight: 500; }
#facets { margin-top: 1px; font-family: "Liberation Sans", Arial, sans-serif; }
.axt { fill: #4d4d4d; font-size: 11.500px; }
.ttl { font-size: 13.800px; } .gl { font-size: 12px; font-weight: 700; }
.ln { fill: none; stroke: #000; stroke-width: 1.300; }
.gate-l { fill: none; stroke: #333; stroke-width: 1.300; vector-effect: non-scaling-stroke; }
.ct { stroke: #666; stroke-width: .75; fill: none; vector-effect: non-scaling-stroke; }
.ct.bg { fill: #fff; }

.duo { display: flex; gap: 30px; } .half { width: 241px; }
.half + .half { width: 240px; }
.runs { display: flex; gap: 45px; margin: 4px 0 20px; }
.r45 { width: 45px; } .cancel { width: 93px; background: #cf7a80; color: #fff; font-weight: 700; }
.hr { height: 1px; background: #eee; margin-bottom: 20px; }
.clr { width: 78px; display: block; }
.opt { display: flex; flex-direction: column; gap: 15px; padding-top: 10px; }
.tasks .duo + .lbl { line-height: 19px; }
.tabs.env { margin-top: 5px; }
.env + .gpu { margin-top: 31px; }
.lt { margin: 25px 0 14px; }
.duo .inp { margin-top: 5px; }
.none { height: 38px; margin-top: 35px; border: solid #b0b0b0; border-width: 1px 0; background: #f9f9f9; line-height: 36px; padding-left: 10px; }
.chart .sel { margin-top: 4px; }

.sb1 { width: 15px; background: #333; padding: 1px 3px 0 4px; flex: none; }
.sb1 i { display: block; height: 1144px; background: #777; border-radius: 4px; }
.sb2 { flex: 1; background: #fafafa; padding: 1px 3px 0 4px; }
.sb2 i { display: block; height: 1234px; background: #bfbfbf; border-radius: 4px; }

.dock { position: absolute; left: 5px; top: 368px; width: 42px; height: 729px; border: 1px solid #999; border-radius: 9px; background: #161616; padding-top: 2px; }
.di { height: 33px; display: flex; align-items: center; padding-left: 8px; }
.di svg { width: 25px; height: 25px; margin-left: -2px; }
.di::before { content: ""; width: 4px; height: 4px; border-radius: 50%; margin: 0 6px 0 -6px; }
.di.run::before { background: #aaa; }
.dock hr { width: 30px; margin: 7px auto; border: 0; height: 1px; background: #555; }

.notes { position: absolute; left: 0; top: 0; }
.route { fill: none; stroke: #ff1493; stroke-opacity: .4; stroke-width: 9.500; stroke-linejoin: bevel; }
.edit { fill: none; stroke-linejoin: round; stroke-linecap: round; }
.o { stroke: #fff; stroke-width: 6.500; } .p { stroke: #ff1493; stroke-width: 3; }
.f { fill: #ff1493; stroke: #fff; stroke-width: 3; paint-order: stroke; }
.badge-n { font: 900 26px Inter, sans-serif; fill: #fff; stroke: #fff; stroke-width: 1.600; text-anchor: middle; }
```
FILE: app.js
```js
const NS = 'http://www.w3.org/2000/svg';

// Range sliders: min/max badges, bar, handle and a labelled tick grid.
document.querySelectorAll('.slider').forEach(el => {
  const min = +el.dataset.min, max = +el.dataset.max, val = +el.dataset.val;
  const x = v => 11.3 + (v - min) / (max - min) * 357;
  const badge = (l, w, t) => `<rect x="${l}" y="0" width="${w}" height="16" rx="3" fill="#e3e3e3"/><text x="${l + w / 2}" y="10" font-size="10" text-anchor="middle" fill="#333">${t}</text>`;
  let s = val > min + 0.5 ? badge(0, min < 1 ? 20 : 12, min) : '';
  s += badge(362, 17, max);
  s += '<rect x=".5" y="25.500" width="378" height="7" rx="3.500" fill="#ececec" stroke="#ccc"/>';
  if (val > min) s += `<rect x="0" y="25" width="${x(val)}" height="8" rx="3.500" fill="#678bc6"/>`;
  const grid = [];
  for (let v = min; v <= max + 0.01; v += 1) grid.push(v);
  if (grid[grid.length - 1] < max - 0.1) grid.push(max);
  grid.forEach((v, i) => {
    s += `<path d="M${x(v)} 33v8" stroke="#000"/><text x="${x(v)}" y="53.500" font-size="9.300" text-anchor="middle" fill="#333">${+v.toFixed(1)}</text>`;
    if (i < grid.length - 1) for (const k of [1 / 3, 2 / 3]) s += `<path d="M${x(v + (grid[i + 1] - v) * k)} 33v4" stroke="#999"/>`;
  });
  const w = val % 1 ? 21 : 12;
  s += `<rect x="${x(val) - w / 2}" y="0" width="${w}" height="17" rx="3" fill="#678bc6"/><text x="${x(val)}" y="12.500" font-size="11" text-anchor="middle" fill="#fff" stroke="#fff" stroke-width=".3">${val}</text>`;
  s += `<circle cx="${x(val)}" cy="28" r="10.500" fill="#dcdcdc" stroke="#aaa"/>`;
  el.innerHTML = s;
});

// Gating facets.
let seed = 7;
const rnd = () => (seed = (seed * 16807) % 2147483647) / 2147483647;
const gauss = () => rnd() + rnd() + rnd() + rnd() - 2;
const dots = (n, cx, cy, sx, sy, tilt = 0) => {
  let d = '';
  for (let i = 0; i < n; i++) {
    const u = gauss();
    d += `M${(cx + u * sx).toFixed(1)} ${(cy + u * tilt + gauss() * sy).toFixed(1)}h2.600v3h-2.600z`;
  }
  return `<path d="${d}"/>`;
};
// Extra points hugging a polyline, just outside a contour.
const hug = (pts, n, r, cx, cy) => {
  let d = '';
  const p = pts.split(' ').map(Number), m = p.length / 2;
  for (let i = 0; i < n; i++) {
    const k = Math.floor(rnd() * m), j = (k + 1) % m, t = rnd(), e = rnd() * rnd() * r;
    const x = p[2 * k] * (1 - t) + p[2 * j] * t, y = p[2 * k + 1] * (1 - t) + p[2 * j + 1] * t;
    const l = Math.hypot(x - cx, y - cy);
    d += `M${(x + (x - cx) / l * e).toFixed(1)} ${(y + (y - cy) / l * e).toFixed(1)}h2.600v3h-2.600z`;
  }
  return `<path d="${d}"/>`;
};
const wob = (pts, a) => {
  const p = pts.split(' ').map(Number), out = [];
  for (let i = 0; i < p.length; i += 2) {
    const j = (i + 2) % p.length;
    for (let k = 0; k < 3; k++) out.push((p[i] + (p[j] - p[i]) * k / 3 + (rnd() - .5) * a).toFixed(1) + ',' + (p[i + 1] + (p[j + 1] - p[i + 1]) * k / 3 + (rnd() - .5) * a).toFixed(1));
  }
  return out.join(' ');
};
const ring = (pts, bg, a = 5) => `<polygon class="ct${bg ? ' bg' : ''}" points="${wob(pts, a)}"/>`;
const txt = (c, x, y, w, t, extra = '') => `<text class="${c}" x="${x}" y="${y}" textLength="${w}" lengthAdjust="spacingAndGlyphs" ${extra}>${t}</text>`;
const axes = (x0, x1, title, tw, xs, ys, xt, xw, yt, yw) => {
  let s = `<path class="ln" d="M${x0} 899V1138.600H${x1}"/>` + txt('ttl', x0 - .5, 890, tw, title);
  for (const [v, x] of xs) s += `<path d="M${x} 1139v3" stroke="#333"/><text class="axt" x="${x}" y="1153" text-anchor="middle">${v}</text>`;
  for (const [v, y] of ys) s += `<path d="M${x0 - 3} ${y}h3" stroke="#333"/><text class="axt" x="${x0 - 5}" y="${y + 4}" text-anchor="end">${v}</text>`;
  const cx = x0 + 131.5, ax = x0 - 17.5;
  return s + txt('', cx - xw / 2, 1167, xw, xt, 'font-size="12.500"') + txt('', ax, 1018.5 + yw / 2, yw, yt, `font-size="12.500" transform="rotate(-90 ${ax} ${1018.5 + yw / 2})"`);
};
const tag = (x, y, w, fill, t) => `<rect x="${x + .7}" y="${y + .7}" width="${w - 1.4}" height="17" rx="1.500" fill="${fill}" stroke="#000" stroke-width="1.800"/>` + txt('gl', x + 5, y + 13.5, w - 10, t);
const p8 = [[8, 909.8], [6, 964.2], [4, 1018.7], [2, 1073.2], [0, 1127.7]];
const cd = o => [['0.0', o], ['2.5', o + 60], ['5.0', o + 119.7], ['7.5', o + 179.5], ['10.0', o + 239.3]];

const o2 = '960 912 968 898 990 888 1020 882 1050 874 1078 868 1102 860 1125 862 1150 872 1172 868 1195 858 1215 864 1240 857 1262 862 1272 876 1276 895 1262 915 1250 932 1235 948 1215 958 1190 952 1170 946 1145 948 1120 938 1100 930 1080 928 1055 932 1030 930 1005 934 980 926';
const b2 = '1112 998 1130 990 1155 990 1180 989 1200 992 1202 1000 1180 1006 1150 1006 1125 1003';
const o3 = '284 490 292 530 296 580 300 640 302 680 296 705 304 725 312 738 325 722 345 708 375 698 402 680 418 655 426 620 414 590 398 570 388 540 382 510 370 490';
const b4 = '925 400 928 375 945 358 975 345 1010 342 1050 338 1090 342 1130 345 1160 355 1175 375 1185 400 1178 435 1150 460 1125 480 1095 490 1070 488 1045 478 1015 468 980 460 950 445 930 425';
const t4 = '1170 440 1205 438 1214 480 1222 530 1216 580 1200 610 1180 628 1150 628 1132 610 1128 570 1138 510 1150 470';

document.getElementById('facets').innerHTML =
  '<clipPath id="c1"><rect x="713" y="876" width="300" height="300"/></clipPath><g clip-path="url(#c1)">' +
  axes(744.5, 1007.5, 'root', 25, [[0, 756.3], [2500, 806], [5000, 856], [7500, 905.7], [10000, 955.5], [12500, 1005.2]], [[6, 909.8], [4, 982.4], [2, 1055], [0, 1127.7]], 'volume', 38.5, 'surface_to_volume', 100) + '</g>' +
  axes(1044.5, 1307.5, '/nonDebris', 68, cd(1056.3), p8, 'CD3e.AF700', 70, 'P14.CTDR', 57) +
  axes(1344.5, 1607, '/nonDebris/Others1', 120, [[2, 1396], [4, 1476], [6, 1555.7]], p8, 'LCMV.AF594', 70, 'XCR1.Venus', 68) +
  axes(1644.5, 1907, '/nonDebris/Others1/Others2', 175, cd(1656.3), [[6, 941.2], [4, 1003.4], [2, 1065.6], [0, 1127.7]], 'CD3e.AF700', 70, 'B220.PB', 45) +
  '<g transform="translate(700 770) scale(.3954 .3333)">' +
  dots(170, 162, 950, 8, 36) + dots(26, 168, 955, 14, 36) +
  '<path d="M140 468h3v3h-3zM141 610h2v8h-2zM141 625h2v14h-2zM141 645h2v4h-2zM141 652h2v12h-2zM141 670h2v60h-2zM155 985l10 14 3-2-8-14zM172 1002h4v3h-4zM178 1003h4v3h-4zM186 1008h4v3h-4zM192 1013h4v3h-4zM200 1015h4v3h-4zM223 1004h4v3h-4zM230 1017h4v3h-4zM252 1016h4v3h-4z"/>' +
  '<path class="ct" d="M143 725Q150 730 150 780 152 860 153 900 162 950 155 970 145 980 144 960V730M145 750Q149 770 148 830M146 860Q147 900 150 930 158 945 153 960 146 955 147 940"/>' +
  '<path class="gate-l" d="M143 904H643V1021H143zM1104 428H1396V677H1104zM955 680H1384V1060H955z"/>' +
  dots(22, 1215, 510, 45, 40, -50) + dots(10, 1165, 595, 30, 20) + dots(14, 1180, 700, 35, 25) +
  dots(300, 1200, 835, 70, 62) + dots(90, 1115, 845, 90, 40) + dots(110, 1240, 870, 35, 55) + dots(90, 1170, 970, 90, 30) + dots(45, 1160, 985, 70, 25) + dots(12, 1080, 990, 30, 25) + '<path d="M1001 806h3v3h-3zM1345 765h3v3h-3zM1240 714h3v3h-3z"/>' +
  hug(o2, 380, 22, 1150, 905) + ring(o2, 1) +
  ring('968 912 985 896 1040 884 1100 872 1150 880 1200 868 1245 866 1264 885 1255 910 1235 935 1210 948 1160 938 1110 928 1060 924 1000 926', 0) +
  ring('980 912 1030 894 1100 884 1150 890 1195 878 1235 872 1254 888 1246 912 1220 936 1180 926 1120 918 1050 914 1000 920', 0) +
  ring('1190 905 1200 888 1225 882 1244 890 1250 902 1238 918 1222 928 1200 922', 0, 3) + ring('982 910 992 905 998 912 990 918', 0, 2) +
  '<path d="M1055 898h4v3h-4zM1070 898h4v3h-4zM1095 897h3v3h-3zM1058 908h3v3h-3z" fill="#555"/>' +
  hug(b2, 50, 15, 1158, 998) + ring(b2, 1, 3) + ring('1135 998 1160 993 1185 996 1180 1002 1145 1002', 0, 3) + ring('1150 998 1160 996 1168 999 1158 1001', 0, 1) +
  '</g><g transform="translate(1290 810) scale(.4209 .3333)">' +
  '<path class="gate-l" d="M248 310H504V500H248zM514 413H694V713H514zM240 500H512V740H240zM920 310H1199L1204 390 1190 425 1150 465 1120 488 1075 515 1040 521H930L920 517zM1255 376L1237 382 1200 398 1180 440 1150 480 1110 545 1090 585 1082 620 1083 676 1090 698 1100 715H1128L1155 705 1204 676 1250 610 1266 580 1281 520 1284 430 1262 382z"/>' +
  dots(75, 320, 393, 50, 14) + dots(30, 330, 420, 60, 25) + dots(130, 425, 620, 30, 70) + dots(60, 440, 660, 60, 60) + dots(40, 400, 520, 35, 40) + dots(30, 290, 705, 25, 25) + dots(60, 400, 700, 90, 25) + dots(16, 575, 585, 30, 20) + dots(14, 590, 610, 60, 60) +
  dots(9, 455, 785, 50, 30) + dots(14, 512, 820, 14, 30) + '<path d="M530 850h3v3h-3zM529 873h3v3h-3zM532 912h3v3h-3zM529 918h3v3h-3zM513 857h3v3h-3zM1155 864h3v3h-3zM1130 831h3v3h-3zM1166 807h3v3h-3z"/>' +
  hug(o3, 200, 20, 350, 610) + ring(o3, 1) +
  '<path class="ct" d="M270 380L285 385 300 378 312 395 322 380 345 385 355 372"/>' +
  ring('290 490 300 530 306 590 308 650 304 700 318 712 350 698 385 690 408 665 418 625 404 592 385 570 374 530 364 490', 0) +
  ring('300 492 308 540 314 600 316 650 322 690 360 684 395 662 408 625 398 600 362 590 356 560 366 530 350 492', 0) +
  ring('336 650 334 625 352 614 384 610 388 635 378 655 362 672 340 668', 0, 3) + ring('320 520 328 508 340 515 345 528 334 545', 0, 3) +
  dots(60, 1160, 480, 15, 20) + dots(30, 1155, 670, 35, 25) + dots(25, 1210, 520, 18, 60) + dots(10, 1155, 750, 15, 30) + dots(70, 990, 455, 60, 25) + dots(40, 1080, 340, 70, 10) +
  hug(b4, 260, 18, 1050, 410) + ring(b4, 1, 10) +
  ring('932 400 940 375 975 358 1020 352 1070 350 1120 352 1155 362 1168 390 1165 425 1130 458 1095 474 1060 468 1025 452 985 440 945 425', 0, 12) +
  ring('945 395 960 375 1010 362 1070 358 1130 366 1155 385 1150 425 1110 450 1070 448 1025 432 980 415', 0, 13) +
  ring('982 385 990 370 1040 368 1090 374 1125 390 1120 420 1080 425 1040 408 1000 402', 0, 10) +
  hug(t4, 110, 14, 1175, 530) + ring(t4, 1, 6) +
  ring('1165 460 1200 455 1212 520 1210 575 1190 605 1155 612 1138 590 1142 530', 0, 6) +
  ring('1165 490 1195 475 1206 530 1198 580 1165 595 1146 570 1152 520', 0, 6) +
  ring('1160 530 1180 495 1196 500 1202 545 1185 572 1162 575 1154 555', 0, 4) + ring('1168 530 1180 518 1190 530 1184 550 1170 555', 0, 3) +
  '</g>' +
  tag(802.5, 1048.5, 136, '#a8ee4a', 'nonDebris 51.97%') + tag(1198, 902, 81.5, '#ecce3f', 'P14 0.53%') + tag(1117.500, 974.3, 119, '#ccbfd9', 'Others1 99.46%') +
  tag(1382.5, 917.3, 102, '#a8eda0', 'XCR1 16.46%') + tag(1508, 925.5, 96.5, '#cb5422', 'LCMV 0.25%') + tag(1403.5, 954.3, 119, '#ccbfd9', 'Others2 82.54%') +
  tag(1647, 901.7, 107, '#7ab3f7', 'Bcells 67.21%') + tag(1749.5, 939.6, 103.5, '#cb9a78', 'Tcells 30.93%');

// Walkthrough markers: click targets and numbered badges.
const marks = [[248.7, 624, 295.3, 624.5], [203.5, 777, 250.500, 777], [642.3, 391, 689.5, 391.5], [1105.8, 391, 1153, 391.5], [560, 670, 607, 670.5], [581.3, 873.6, 628.3, 874], [399.7, 965, 447, 965.5], [536.3, 1071.4, 583.3, 1071.7], [0, 0, 538, 1298.5], [0, 0, 610, 1371], [0, 0, 1336, 853]];
document.getElementById('marks').innerHTML = marks.map(([x, y, bx, by], i) =>
  (x ? `<use href="#a-ring" x="${x - 24}" y="${y - 24}" width="72" height="80"/>` : '') +
  `<rect x="${bx - 20}" y="${by - 20}" width="40" height="40" rx="10" fill="#fff"/><rect x="${bx - 18.700}" y="${by - 18.700}" width="37.400" height="37.400" rx="9" fill="#ff1493"/><text class="badge-n" x="${bx}" y="${by + 9.4}">${i + 1}</text>`).join('');
```
